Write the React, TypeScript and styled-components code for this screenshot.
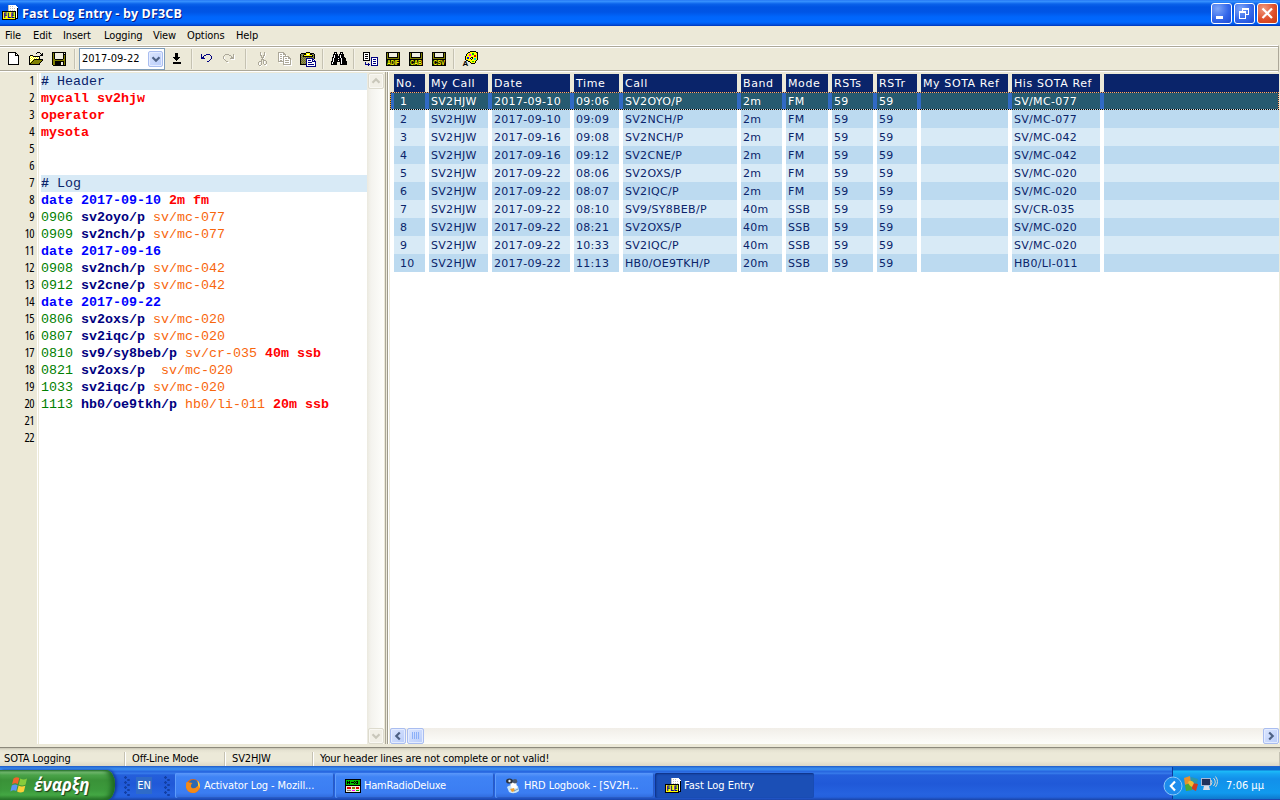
import React, { FC } from "react";
import styled, { createGlobalStyle } from "styled-components";

const Global = createGlobalStyle`
  * { box-sizing: border-box; }
  body {
    margin: 0;
    background: #ece9d8;
    overflow: hidden;
  }
`;

const Window = styled.div`
  width: 1280px;
  height: 800px;
  display: flex;
  flex-direction: column;
  overflow: hidden;
  background: #ece9d8;
  color: #000;
  font-family: "DejaVu Sans Condensed", "DejaVu Sans", sans-serif;
  font-stretch: condensed;
  font-size: 11px;
  white-space: pre;
  cursor: default;
`;

const Text = styled.span<{ $ls?: number }>`
  letter-spacing: ${(p) => p.$ls ?? 0}px;
`;

/* title bar */

const TitleBar = styled.div`
  flex: none;
  height: 26px;
  display: flex;
  align-items: center;
  padding: 0 2px;
  background: linear-gradient(#1c6cf0 0, #3c96ff 1px, #2c86fa 2px, #0a62ea 4px, #0054e3 7px, #0055e5 12px, #0066fc 17px, #0068ff 22px, #0058ea 24px, #0036b8 26px);
`;

const Title = styled.span`
  flex: 1;
  margin-left: 4px;
  color: #fff;
  font-family: "Open Sans", sans-serif;
  font-weight: 700;
  font-stretch: normal;
  font-size: 12.5px;
  letter-spacing: 0.15px;
  text-shadow: 1px 1px 0 #0a1883;
`;

const WindowButton = styled.span<{ $close?: boolean }>`
  width: 21px;
  height: 21px;
  margin-left: 2px;
  border: 1px solid #fff;
  border-radius: 3px;
  background: ${(p) =>
    p.$close
      ? "radial-gradient(circle at 30% 25%, #ee9a80, #e0502c 55%, #c83a10)"
      : "radial-gradient(circle at 30% 25%, #7ea6f8, #3468ea 55%, #1c4ad4)"};

  svg { display: block; }
`;

/* menu and toolbar */

const MenuBar = styled.div`
  flex: none;
  height: 19px;
  display: flex;
  align-items: center;
  padding-left: 5px;
`;

const MenuItem = styled.span<{ $w: number }>`
  width: ${(p) => p.$w}px;
  letter-spacing: -0.1px;
`;

const ToolBar = styled.div`
  flex: none;
  height: 27px;
  display: flex;
  align-items: center;
  margin-right: 1px;
  padding-left: 2px;
  border-top: 1px solid #fff;
  border-bottom: 1px solid #fff;
  border-right: 1px solid #aca899;
  box-shadow: inset 0 1px #aca899, inset 0 2px #fff, inset 0 -1px #aca899;
`;

const ToolButton = styled.span`
  width: 23px;
  height: 22px;
  padding: 3px 3px 3px 4px;

  svg { display: block; overflow: visible; }
`;

const ToolSeparator = styled.span`
  width: 2px;
  height: 20px;
  margin: 0 3px;
  border-left: 1px solid #c5c2b2;
  border-right: 1px solid #f4f2e8;
`;

const Combo = styled.span`
  width: 86px;
  height: 22px;
  display: flex;
  align-items: center;
  justify-content: space-between;
  padding: 0 1px 0 2px;
  border: 1px solid #7f9db9;
  background: #fff;
`;

/* scroll bars */

const ScrollButton = styled.span<{ $disabled?: boolean; $w?: number }>`
  flex: none;
  width: ${(p) => p.$w ?? 16}px;
  height: 16px;
  display: flex;
  align-items: center;
  justify-content: center;
  border: 1px solid ${(p) => (p.$disabled ? "#dddbce" : "#a9bdf0")};
  border-radius: 2px;
  background: ${(p) => (p.$disabled ? "#f1efe6" : "linear-gradient(135deg, #dce6fe, #b8ccfa)")};
  box-shadow: inset 0 0 0 1px ${(p) => (p.$disabled ? "#f9f8f3" : "#e4ecff")};
`;

const VScroll = styled.div`
  width: 17px;
  flex: none;
  display: flex;
  flex-direction: column;
  align-items: center;
  justify-content: space-between;
  background: linear-gradient(90deg, #ebe9df, #f4f3ee 4px, #fefefb);
`;

const HScroll = styled.div`
  height: 16px;
  flex: none;
  display: flex;
  gap: 1px;
  background: linear-gradient(#f1eee8, #fdfdfa);
`;

const Spring = styled.span`
  flex: 1;
`;

/* editor */

const Body = styled.div`
  flex: none;
  height: 676px;
  display: flex;
  padding: 1px 1px 3px 0;
  border-bottom: 1px solid #8c897c;
`;

const Editor = styled.div`
  width: 384px;
  flex: none;
  display: flex;
  background: #fff;
`;

const Gutter = styled.div`
  width: 39px;
  flex: none;
  padding-right: 2px;
  background: linear-gradient(90deg, #ece9d8 37px, #fff 37px, #fff 38px, #ece9d8 38px);
  font-family: "Open Sans", sans-serif;
  font-stretch: 75%;
  font-size: 12.5px;
  line-height: 15px;
  text-align: right;

  div { height: 17px; padding-right: 3px; letter-spacing: -0.6px; }
`;

const Code = styled.div`
  flex: 1;
  padding-left: 2px;
  font-family: "Liberation Mono", monospace;
  font-size: 13.33px;
`;

const CodeLine = styled.div<{ $section?: boolean }>`
  height: 17px;
  line-height: 17px;
  background: ${(p) => (p.$section ? "#d8eaf6" : "#fff")};
`;

const tokenColors = {
  hash: "#0a246a",
  section: "#0a246a",
  key: "#ff0000",
  date: "#0000ff",
  time: "#008000",
  call: "#000080",
  ref: "#f8660c",
};

type TokenKind = keyof typeof tokenColors;

const Token = styled.span<{ $kind: TokenKind }>`
  color: ${(p) => tokenColors[p.$kind]};
  font-weight: ${(p) => (["section", "time", "ref"].includes(p.$kind) ? 400 : 700)};
`;

const Splitter = styled.div`
  width: 6px;
  flex: none;
  margin-top: -1px;
  background: linear-gradient(90deg, #ece9d8 1px, #aca899 1px, #aca899 2px, #ece9d8 2px, #ece9d8 3px, #9d9a8c 3px, #9d9a8c 4px, #fff 4px, #fff 5px, #ece9d8 5px);
`;

/* log table */

const LogPane = styled.div`
  flex: 1;
  display: flex;
  flex-direction: column;
  background: #fff;
`;

const columns = [31, 59, 78, 45, 114, 41, 42, 41, 40, 87, 88, 175];

const Row = styled.div<{ $kind: "head" | "selected" | "odd" | "even" }>`
  height: ${(p) => (p.$kind === "head" ? 19 : 18)}px;
  flex: none;
  display: grid;
  grid-template-columns: ${columns.map((w) => w + "px").join(" ")};
  column-gap: 4px;
  padding: ${(p) => (p.$kind === "head" ? "1px 0 0 4px" : "0 0 0 4px")};
  line-height: 18px;
  font-family: "DejaVu Sans", sans-serif;
  font-stretch: normal;
  color: ${(p) => (p.$kind === "head" || p.$kind === "selected" ? "#fff" : "#0a246a")};
  background: ${(p) => ({ head: "#ece9d8", selected: "#316ac5", odd: "#fff", even: "#fff" })[p.$kind]};
  letter-spacing: ${(p) => (p.$kind === "head" ? 0.6 : 0.3)}px;
  position: relative;

  ${(p) =>
    p.$kind === "selected" &&
    `&::after {
      content: "";
      position: absolute;
      inset: 0;
      background:
        repeating-linear-gradient(90deg, #ffa66e 0 1px, #20303c 1px 2px) top / 100% 1px no-repeat,
        repeating-linear-gradient(90deg, #000 0 1px, #d0d8dc 1px 2px) bottom / 100% 1px no-repeat,
        repeating-linear-gradient(#ffa020 0 1px, #20303c 1px 2px) left / 1px 100% no-repeat,
        repeating-linear-gradient(#ffa66e 0 1px, #20303c 1px 2px) right / 1px 100% no-repeat;
    }`}
`;

const cellColors = { head: "#0a246a", selected: "#265a70", odd: "#d8eaf6", even: "#bcdaf0" };

const Cell = styled.span<{ $kind: keyof typeof cellColors; $indent?: boolean }>`
  height: 18px;
  padding-top: 1px;
  padding-left: ${(p) => (p.$indent ? 6 : 2)}px;
  background: ${(p) => cellColors[p.$kind]};
`;

/* status bar */

const StatusBar = styled.div`
  flex: none;
  height: 18px;
  display: flex;
  align-items: center;
  padding-top: 3px;
  background: linear-gradient(#c8c5b4 0, #e4e1d0 2px, #ece9d8 5px, #ece9d8 13px, #dcd8c6 18px);
`;

const StatusCell = styled.span<{ $w?: number }>`
  ${(p) => (p.$w ? `width: ${p.$w}px;` : "flex: 1;")}
  height: 14px;
  line-height: 13px;
  padding-left: 6px;
  border-left: 1px solid #fff;
  border-right: 1px solid #c5c2b2;
  letter-spacing: -0.15px;

  &:first-child { padding-left: 3px; border-left-color: transparent; }
`;

/* task bar */

const TaskBar = styled.div`
  flex: none;
  height: 34px;
  display: flex;
  background: linear-gradient(#1f56c0 0, #2a72dc 1px, #3c90f0 3px, #2c70e4 5px, #2460dc 6px, #3a80ee 7px, #245edb 9px, #2059d8 18px, #2663e0 28px, #2460dc 31px, #1a44a8 34px);
  color: #fff;
`;

const StartButton = styled.div`
  width: 115px;
  height: 30px;
  margin-top: 4px;
  display: flex;
  align-items: center;
  gap: 5px;
  padding-left: 10px;
  border-radius: 0 9px 9px 0 / 0 14px 14px 0;
  background: linear-gradient(#2f7a2e 0, #7fc47c 2px, #4ba44a 5px, #3a9238 10px, #3c9a3c 20px, #44a844 25px, #2c7a2c 30px);
  box-shadow: inset -4px 0 5px #1f6a24, 2px 0 3px #123a9c;
`;

const StartText = styled.span`
  font-family: "Open Sans", "Noto Sans", sans-serif;
  font-size: 17px;
  font-weight: 700;
  font-stretch: normal;
  font-style: italic;
  line-height: 26px;
  letter-spacing: -0.2px;
  text-shadow: 1px 1px 1px #1c3c1c;
`;

const Grip = styled.span`
  width: 6px;
  height: 20px;
  margin: 10px 0 0 9px;
  background:
    radial-gradient(circle at 1.5px 1.500px, #123fa4 1px, transparent 1.5px) 0 0 / 6px 5px,
    radial-gradient(circle at 4.5px 4px, #123fa4 1px, transparent 1.5px) 0 0 / 6px 5px;
`;

const Language = styled.span`
  width: 16px;
  height: 17px;
  margin: 11px 3px 0 6px;
  line-height: 17px;
  text-align: center;
  background: #2f6bc8;
`;

const Tasks = styled.div`
  flex: 1;
  display: flex;
  gap: 1px;
  margin-left: 5px;
  padding-top: 7px;
`;

const Task = styled.div<{ $active?: boolean }>`
  width: 159px;
  height: 25px;
  display: flex;
  align-items: center;
  gap: 3px;
  padding-left: 10px;
  border-radius: 2px;
  background: ${(p) =>
    p.$active ? "#1b4fb6" : "linear-gradient(#5b98fa 0, #3f83f5 4px, #3b7df2 20px, #2f69da)"};
  box-shadow: ${(p) =>
    p.$active ? "inset 1px 1px 2px #0d2f80" : "inset 1px 0 #5e9cfb, inset -1px -1px #2a5cc4"};

  svg { flex: none; }
`;

const Tray = styled.div`
  width: 108px;
  height: 32px;
  margin-top: 1px;
  padding-top: 1px;
  display: flex;
  align-items: center;
  border-left: 1px solid #0c3a9a;
  background: linear-gradient(#0e6cd0 0, #0e6cd0 3px, #1cbcf8 4px, #17a4f2 7px, #1290ea 12px, #119aee 26px, #0f78cc 32px);
`;

const TrayToggle = styled.svg`
  flex: none;
  margin: 4px 0 0 -10px;
`;

const Clock = styled.span`
  margin: 4px 0 0 7px;
`;

/* pixel drawings: one character per pixel, "." is empty */

const palette: Record<string, string> = {
  k: "#000",
  w: "#fff",
  y: "#ffff00",
  o: "#808000",
  g: "#808080",
  s: "#aca899",
  l: "#c0c0c0",
  n: "#000080",
  b: "#0000ff",
  r: "#e00000",
  m: "#ff00ff",
  c: "#00e0e0",
  e: "#00c000",
  f: "#f0eee0",
};

const PixelIcon: FC<{ rows: string[]; size?: number; children?: React.ReactNode }> = ({ rows, size = 16, children }) => (
  <svg width={size} height={size} viewBox={`0 0 ${size} ${size}`} shapeRendering="crispEdges">
    {rows.flatMap((row, y) =>
      [...row].map((ch, x) => palette[ch] && <rect key={`${x}-${y}`} x={x} y={y} width="1" height="1" fill={palette[ch]} />)
    )}
    {children}
  </svg>
);

const icons = {
  blank: [
    "",
    "..kkkkkkkk",
    "..kwwwwwwkk",
    "..kwwwwwwkwk",
    "..kwwwwwwkkkk",
    "..kwwwwwwwwwk",
    "..kwwwwwwwwwk",
    "..kwwwwwwwwwk",
    "..kwwwwwwwwwk",
    "..kwwwwwwwwwk",
    "..kwwwwwwwwwk",
    "..kwwwwwwwwwk",
    "..kwwwwwwwwwk",
    "..kkkkkkkkkkk",
  ],
  open: [
    "",
    "........kkk",
    ".......k...k.k",
    "............kk",
    ".kkk.......kkk",
    "kywykkkkkkk",
    "kwywywywywk",
    "kywywywywyk",
    "kwywykkkkkkkkk",
    "kywykooooooook",
    "kwykooooooook",
    "kykooooooook",
    "kkooooooook",
    "kkkkkkkkkkk",
  ],
  save: [
    "",
    "kkkkkkkkkkkkkk",
    "kokffffffffkfk",
    "kokffffffffkkk",
    "kokffffffffkok",
    "kokffffffffkok",
    "kokffffffffkok",
    "kokffffffffkok",
    "kookkkkkkkkook",
    "kooooooooooook",
    "kookkkkkkkkkok",
    "kookkkkkkffkok",
    "kookkkkkkffkok",
    "kookkkkkkffkok",
    ".kkkkkkkkkkkkk",
  ],
  down: [
    "",
    "",
    "......kkk",
    "......kkk",
    "......kkk",
    "......kkk",
    "....kkkkkkk",
    ".....kkkkk",
    "......kkk",
    ".......k",
    "",
    "....kkkkkkkk",
    "....kkkkkkkk",
  ],
  undo: [
    "",
    "",
    "",
    ".n....nnnn",
    ".n..nn....n",
    ".n.n.......n",
    ".nnn.......n",
    ".nnnn......n",
    "..........n",
    ".........n",
    ".......nn",
  ],
  redo: [
    "",
    "",
    "",
    "..ssss....s",
    ".s....ss..sw",
    "s.......s.sw",
    "sw......sssw",
    "sw.....ssssw",
    ".s......wwww",
    "..s",
    "...ss",
    "....ww",
  ],
  cut: [
    "",
    "......s...s",
    "......sw..sw",
    "......sw..sw",
    "......ss.ssw",
    ".......s.sw",
    ".......sssw",
    "........sw",
    ".......sss",
    ".......s.sss",
    ".....sss.sw.s",
    "....s.ws.sw.s",
    "....sw.s.sw.s",
    "....sw.s..ssw",
    ".....ssw...ww",
    "......w",
  ],
  copy: [
    "",
    ".ssssss",
    ".swwwwss",
    ".swsswsss",
    ".swwwwwwsw",
    ".swsswssssss",
    ".swwwwswwwwss",
    ".swsswswsswsss",
    ".swwwwswwwwwws",
    ".swsswswsssswsw",
    ".sssssswwwwwwsw",
    "..wwwwswsssswsw",
    "......swwwwwwsw",
    "......ssssssssw",
    ".......wwwwwwww",
  ],
  paste: [
    "",
    "......kkkk",
    ".kkkkkyyyykkkk",
    "kggokkywwykkggk",
    "kogkyyyyyyyykok",
    "kgokkkkkkkkkkgk",
    "kogogogogogogok",
    "kgogognnnnnnngk",
    "kogogonwwwwwnn",
    "kgogognwnnnwnwn",
    "kogogonwwwwwnnnn",
    "kgogognwnnnnwwwn",
    "kogogonwwwwwwwwn",
    "kkkkkknwnnnnnnwn",
    "......nwwwwwwwwn",
    "......nnnnnnnnnn",
  ],
  find: [
    "",
    "...kkk...kkk",
    "...kwk...kwk",
    "..kkkkk.kkkkk",
    "..kwkkk.kwkkk",
    "..kwkkkkkwkkk",
    ".kkwkkkkkwkkkk",
    ".kwkkkkwkkwkkkk",
    ".kwkkkkkkkwkkkk",
    ".kwkkkkwkkwkkkk",
    "kkwkkkkkkkwkkkkk",
    "kwkkkk...kwkkkkk",
    "kwkkkk...kwkkkkk",
    "kkkkkk...kkkkkkk",
  ],
  import: [
    "",
    ".kkkkkkk",
    ".kwwwwwk",
    ".kwkkkwk",
    ".kwwwwwk",
    ".kwkkkwk",
    ".kwwwwwk.nnnnnnn",
    ".kwkkkwk.nwwwwwn",
    ".kwwwwwk.nwnnnwn",
    ".kkkkkkk.nwwwwwn",
    ".........nwnnnwn",
    "...n.....nwwwwwn",
    "...n..n..nwnnnwn",
    "...nnnnn.nwwwwwn",
    "......n..nnnnnnn",
  ],
  disk: [
    "",
    ".kkkkkkkkkkkkkk",
    ".kokffffffffkok",
    ".kokffffffffkok",
    ".kokffffffffkok",
    ".kokffffffffkok",
    ".kokkkkkkkkkkok",
    ".kooooooooooook",
    ".kkkkkkkkkkkkkk",
    ".kkkkkkkkkkkkkk",
    ".kkkkkkkkkkkkkk",
    ".kkkkkkkkkkkkkk",
    ".kkkkkkkkkkkkkk",
    ".kkkkkkkkkkkkkk",
    ".kkkkkkkkkkkkkk",
  ],
  colors: [
    "........kkkkkk",
    "......kkyyyyyykk",
    ".....kyyyyeeyyyk",
    "....kyymmyeeyyyk",
    "....kyymmyyyrryk",
    "...kyyyyyyyyrryk",
    "...kybbyykkyyyyk",
    "...kybbyk.kyccyk",
    "...kyyyyykyyccyk",
    "....kkyyyyyyyyk",
    "......kkyyeeyk",
    "........kyyyyk",
    ".........kkkk",
  ],
  page: [
    "......lwwwwwww",
    "......lwlwlwwww",
    "......lwwwwwwwww",
    "......lwlwlwlwwk",
    "......lwwwwwwwwk",
    "......lwlwlwlwwk",
    "kkkkkkkkkkkkkkwk",
    "kyyyyyyyyyyyykwk",
    "kyyyyyyyyyyyykwk",
    "kyyyyyyyyyyyykwk",
    "kyyyyyyyyyyyykwk",
    "kyyyyyyyyyyyykwk",
    "kyyyyyyyyyyyykwk",
    "kyyyyyyyyyyyykkk",
    "kkkkkkkkkkkkkk",
  ],
  radio: [
    "",
    "kkkkkkkkkkkkkkkk",
    "keeeeeeeeeeeeeek",
    "kekekeeeekekkeek",
    "kekkkekkkekekeek",
    "kekekeeeekekkeek",
    "keeeeeeeeeeeeeek",
    "kkkkkkkkkkkkkkkk",
    "kffffffffffffffk",
    "kfrrrrfooofrrrfk",
    "kfrrrrfooofrrrfk",
    "kffffffffffffffk",
    "kfggggfmmmfeeefk",
    "kffffffffffffffk",
    "kkkkkkkkkkkkkkkk",
  ],
};

const DiskIcon: FC<{ label: string }> = ({ label }) => (
  <PixelIcon rows={icons.disk}>
    <text x="2" y="14" fontSize="7.5" fontWeight="700" fontFamily="Liberation Sans" fill="#ffff00" textLength="12" lengthAdjust="spacingAndGlyphs">
      {label}
    </text>
  </PixelIcon>
);

const FleIcon: FC = () => (
  <PixelIcon rows={icons.page}>
    <text x="1.5" y="13" fontSize="7.5" fontWeight="700" fontFamily="DejaVu Sans" fill="#0000a0" textLength="11" lengthAdjust="spacingAndGlyphs">
      FLE
    </text>
  </PixelIcon>
);

const Chevron: FC<{ dir: "left" | "right" | "up" | "down"; color?: string }> = ({ dir, color = "#4d6185" }) => (
  <svg width="10" height="10" viewBox="0 0 10 10">
    <path
      d="M1.5 3.2 5 6.7 8.5 3.2"
      fill="none"
      stroke={color}
      strokeWidth="2.2"
      transform={`rotate(${{ down: 0, left: 90, up: 180, right: 270 }[dir]} 5 5)`}
    />
  </svg>
);

const StartFlag = () => (
  <svg width="19" height="18" viewBox="0 0 19 18">
    <path d="M3.5 2.5Q6.5.2 9.3 2L7.8 8Q5 6.500 2 8.500Z" fill="#f0622c" />
    <path d="M10.300 2.500Q13.500 4.500 17 2.600L15.600 8.500Q12 10.300 8.800 8.400Z" fill="#88cc3c" />
    <path d="M1.800 9.600Q4.800 7.600 7.600 9.200L6.200 15Q3.300 13.500.4 15.500Z" fill="#5c94f4" />
    <path d="M8.600 9.600Q11.800 11.400 15.300 9.700L13.900 15.500Q10.500 17.300 7.100 15.500Z" fill="#fcd038" />
  </svg>
);

const FirefoxIcon = () => (
  <svg width="16" height="16" viewBox="0 0 16 16">
    <circle cx="8" cy="8" r="7" fill="#e8640c" />
    <circle cx="8.500" cy="6.500" r="4.800" fill="#2c68b0" />
    <path d="M1.200 4.500Q3 3.500 4.200 4.600Q6 4.200 7.500 5.300Q6 6 6.200 7Q5.200 8.500 6.800 10Q10 11.200 13.200 7.500Q14 5.500 12.500 2.500Q16 6 14.600 10.200Q12.500 14.800 8 15Q2.500 14.500 1 9.500Z" fill="#f48a18" />
    <path d="M12.500 2.500Q15.800 6 14.300 10.500Q13.800 8 13.200 7.500Z" fill="#ffd440" />
  </svg>
);

const LogbookIcon = () => (
  <svg width="16" height="16" viewBox="0 0 16 16">
    <path d="M2 9Q7 5 13 8L14 13Q9 17 4 14Z" fill="#cce6f8" />
    <path d="M5 5 11 3 12 10 7 11Z" fill="#fff" />
    <ellipse cx="4.500" cy="3" rx="3.500" ry="2.600" fill="#2c3440" />
    <circle cx="10" cy="3.200" r="2.300" fill="#485870" />
    <circle cx="4.500" cy="3" r="1.200" fill="#f0f0f0" />
    <path d="M5 11 9 10 10 13 7 14Z" fill="#f0a030" />
    <path d="M9 13 13 11" stroke="#7098b8" strokeWidth="1" />
  </svg>
);

const TrayIcons = () => (
  <svg width="36" height="18" viewBox="0 0 36 18">
    <path d="M1 3 7 1 8 8 2 10Z" fill="#e8902c" />
    <path d="M8 2 15 4 14 9 8 8Z" fill="#2c98a8" />
    <path d="M2 10 8 8 9 15 3 16Z" fill="#4ca838" />
    <path d="M9 8 15 9 13 16 9 14Z" fill="#d03c20" />
    <path d="M5 7Q8 4 11 8L9 12Q6 11 5 7Z" fill="#f4bc30" />
    <rect x="18.500" y="3.500" width="9" height="7" fill="#20305c" stroke="#a8b8d4" />
    <path d="M21 11h5l1 4h-7Z" fill="#d8dce8" />
    <path d="M28 5q2 2 0 5M30.500 3q3.500 4 0 8M32.500 1.500q4 5 0 10.500" fill="none" stroke="#d8d8d0" strokeWidth="1" />
  </svg>
);

/* contents */

const menu: [string, number][] = [
  ["File", 28],
  ["Edit", 30],
  ["Insert", 41],
  ["Logging", 49],
  ["View", 34],
  ["Options", 49],
  ["Help", 30],
];

const ref = (time: string, call: string, sota: string, rest = ""): [TokenKind, string][] => [
  ["time", time + " "],
  ["call", call + " "],
  ["ref", sota + " "],
  ["key", rest],
];

const code: [TokenKind, string][][] = [
  [["hash", "#"], ["section", " Header"]],
  [["key", "mycall sv2hjw"]],
  [["key", "operator"]],
  [["key", "mysota"]],
  [],
  [],
  [["hash", "#"], ["section", " Log"]],
  [["date", "date 2017-09-10 "], ["key", "2m fm"]],
  ref("0906", "sv2oyo/p", "sv/mc-077"),
  ref("0909", "sv2nch/p", "sv/mc-077"),
  [["date", "date 2017-09-16"]],
  ref("0908", "sv2nch/p", "sv/mc-042"),
  ref("0912", "sv2cne/p", "sv/mc-042"),
  [["date", "date 2017-09-22"]],
  ref("0806", "sv2oxs/p", "sv/mc-020"),
  ref("0807", "sv2iqc/p", "sv/mc-020"),
  ref("0810", "sv9/sy8beb/p", "sv/cr-035", "40m ssb"),
  ref("0821", "sv2oxs/p ", "sv/mc-020"),
  ref("1033", "sv2iqc/p", "sv/mc-020"),
  ref("1113", "hb0/oe9tkh/p", "hb0/li-011", "20m ssb"),
  [],
  [],
];

const head = ["No.", "My Call", "Date", "Time", "Call", "Band", "Mode", "RSTs", "RSTr", "My SOTA Ref", "His SOTA Ref", ""];

const log = [
  ["2017-09-10", "09:06", "SV2OYO/P", "2m", "FM", "SV/MC-077"],
  ["2017-09-10", "09:09", "SV2NCH/P", "2m", "FM", "SV/MC-077"],
  ["2017-09-16", "09:08", "SV2NCH/P", "2m", "FM", "SV/MC-042"],
  ["2017-09-16", "09:12", "SV2CNE/P", "2m", "FM", "SV/MC-042"],
  ["2017-09-22", "08:06", "SV2OXS/P", "2m", "FM", "SV/MC-020"],
  ["2017-09-22", "08:07", "SV2IQC/P", "2m", "FM", "SV/MC-020"],
  ["2017-09-22", "08:10", "SV9/SY8BEB/P", "40m", "SSB", "SV/CR-035"],
  ["2017-09-22", "08:21", "SV2OXS/P", "40m", "SSB", "SV/MC-020"],
  ["2017-09-22", "10:33", "SV2IQC/P", "40m", "SSB", "SV/MC-020"],
  ["2017-09-22", "11:13", "HB0/OE9TKH/P", "20m", "SSB", "HB0/LI-011"],
];

const Tool: FC<{ icon: keyof typeof icons }> = ({ icon }) => (
  <ToolButton>
    <PixelIcon rows={icons[icon]} />
  </ToolButton>
);

const Tools = () => (
  <ToolBar>
    <Tool icon="blank" />
    <Tool icon="open" />
    <Tool icon="save" />
    <ToolSeparator />
    <Combo>
      <Text>2017-09-22</Text>
      <ScrollButton $w={15}>
        <Chevron dir="down" />
      </ScrollButton>
    </Combo>
    <Tool icon="down" />
    <ToolSeparator />
    <Tool icon="undo" />
    <Tool icon="redo" />
    <ToolSeparator />
    <Tool icon="cut" />
    <Tool icon="copy" />
    <Tool icon="paste" />
    <ToolSeparator />
    <Tool icon="find" />
    <ToolSeparator />
    <Tool icon="import" />
    {["ADIF", "CAB", "CSV"].map((label) => (
      <ToolButton key={label}>
        <DiskIcon label={label} />
      </ToolButton>
    ))}
    <ToolSeparator />
    <ToolButton>
      <PixelIcon rows={icons.colors}>
        <text x="0.5" y="15" fontSize="8" fontWeight="700" fontFamily="Liberation Sans" fill="#000">A</text>
      </PixelIcon>
    </ToolButton>
  </ToolBar>
);

const LogTable = () => (
  <LogPane>
    <Row $kind="head">
      {head.map((h, i) => (
        <Cell key={i} $kind="head">{h}</Cell>
      ))}
    </Row>
    {log.map(([date, time, call, band, mode, sota], n) => {
      const kind = n === 0 ? "selected" : n % 2 ? "even" : "odd";
      return (
        <Row key={n} $kind={kind}>
          {[n + 1, "SV2HJW", date, time, call, band, mode, "59", "59", "", sota, ""].map((value, i) => (
            <Cell key={i} $kind={kind} $indent={i === 0}>{value}</Cell>
          ))}
        </Row>
      );
    })}
    <Spring />
    <HScroll>
      <ScrollButton><Chevron dir="left" /></ScrollButton>
      <ScrollButton $w={17}>
        <svg width="8" height="8" viewBox="0 0 8 8" shapeRendering="crispEdges">
          <path d="M.5 0v7M2.500 0v7M4.500 0v7M6.500 0v7" stroke="#8cb0f8" />
        </svg>
      </ScrollButton>
      <Spring />
      <ScrollButton><Chevron dir="right" /></ScrollButton>
    </HScroll>
  </LogPane>
);

export default function App() {
  return (
    <Window>
      <Global />
      <TitleBar>
        <FleIcon />
        <Title>Fast Log Entry - by DF3CB</Title>
        <WindowButton>
          <svg width="19" height="19"><rect x="4" y="12" width="7" height="3" fill="#fff" /></svg>
        </WindowButton>
        <WindowButton>
          <svg width="19" height="19" fill="none" stroke="#fff" shapeRendering="crispEdges">
            <path d="M7 5h7M7 4h7M13.500 4v7M11 10.500h3M7.500 4v3" />
            <path d="M4.500 8v6.500h6V8M4 7.500h7M4 8.500h7" />
          </svg>
        </WindowButton>
        <WindowButton $close>
          <svg width="19" height="19"><path d="M4.500 4.500 14 14M14 4.500 4.500 14" stroke="#fff" strokeWidth="2.200" /></svg>
        </WindowButton>
      </TitleBar>
      <MenuBar>
        {menu.map(([name, width]) => (
          <MenuItem key={name} $w={width}>{name}</MenuItem>
        ))}
      </MenuBar>
      <Tools />
      <Body>
        <Editor>
          <Gutter>
            {code.map((_, i) => (
              <div key={i}>{i + 1}</div>
            ))}
          </Gutter>
          <Code>
            {code.map((line, i) => (
              <CodeLine key={i} $section={line[0]?.[0] === "hash"}>
                {line.map(([kind, value], j) => (
                  <Token key={j} $kind={kind}>{value}</Token>
                ))}
              </CodeLine>
            ))}
          </Code>
          <VScroll>
            <ScrollButton $disabled><Chevron dir="up" color="#c9c7ba" /></ScrollButton>
            <ScrollButton $disabled><Chevron dir="down" color="#c9c7ba" /></ScrollButton>
          </VScroll>
        </Editor>
        <Splitter />
        <LogTable />
      </Body>
      <StatusBar>
        <StatusCell $w={125}>SOTA Logging</StatusCell>
        <StatusCell $w={100}>Off-Line Mode</StatusCell>
        <StatusCell $w={88}>SV2HJW</StatusCell>
        <StatusCell>Your header lines are not complete or not valid!</StatusCell>
      </StatusBar>
      <TaskBar>
        <StartButton>
          <StartFlag />
          <StartText>έναρξη</StartText>
        </StartButton>
        <Grip />
        <Language>EN</Language>
        <Grip />
        <Tasks>
          <Task><FirefoxIcon /><Text $ls={-0.1}>Activator Log - Mozill...</Text></Task>
          <Task><PixelIcon rows={icons.radio} /><Text $ls={-0.25}>HamRadioDeluxe</Text></Task>
          <Task><LogbookIcon /><Text $ls={-0.1}>HRD Logbook - [SV2H...</Text></Task>
          <Task $active><FleIcon /><Text>Fast Log Entry</Text></Task>
        </Tasks>
        <Tray>
          <TrayToggle width="20" height="20" viewBox="0 0 20 20">
            <circle cx="10" cy="10" r="9" fill="#1c8cec" stroke="#8cc8fa" />
            <path d="M12 5.500 7.800 10 12 14.500" fill="none" stroke="#fff" strokeWidth="2.200" />
          </TrayToggle>
          <TrayIcons />
          <Clock>7:06 μμ</Clock>
        </Tray>
      </TaskBar>
    </Window>
  );
}
